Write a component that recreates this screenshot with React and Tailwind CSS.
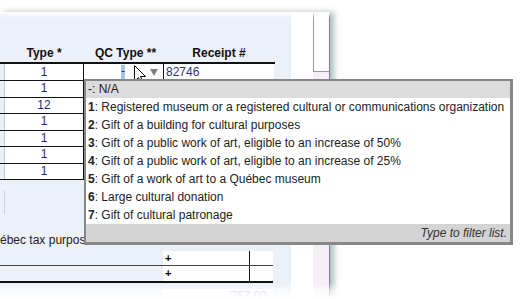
const OPTIONS = [
  { code: '1', label: 'Registered museum or a registered cultural or communications organization' },
  { code: '2', label: 'Gift of a building for cultural purposes' },
  { code: '3', label: 'Gift of a public work of art, eligible to an increase of 50%' },
  { code: '4', label: 'Gift of a public work of art, eligible to an increase of 25%' },
  { code: '5', label: 'Gift of a work of art to a Québec museum' },
  { code: '6', label: 'Large cultural donation' },
  { code: '7', label: 'Gift of cultural patronage' },
];

const TYPE_ROWS = [
  { value: '1', h: 'h-[16px]' },
  { value: '12', h: 'h-[15px]' },
  { value: '1', h: 'h-[16px]' },
  { value: '1', h: 'h-[15px]' },
  { value: '1', h: 'h-[16px]' },
  { value: '1', h: 'h-[15px]' },
];

function Cursor() {
  return (
    <svg width="13" height="21" viewBox="0 0 13 21" className="absolute left-[134px] top-[65px]">
      <path
        d="M0.5 0.5 L0.5 16.5 L4.5 12.5 L7.5 19.5 L9.5 18.5 L6.5 11.5 L11.5 11.5 Z"
        fill="white"
        stroke="black"
        strokeWidth="1"
      />
    </svg>
  );
}

function Dropdown() {
  return (
    <div className="absolute left-[84px] top-[79px] w-[429px] bg-white border-t-2 border-l-2 border-r-[3px] border-b-[3px] border-[#878787] text-[12px] text-[#222]">
      <div className="h-[17px] leading-[17px] pl-[2px] bg-[#dcdcdc]">-: N/A</div>
      {OPTIONS.map((o) => (
        <div key={o.code} className="h-[18px] leading-[18px] pl-[2px] whitespace-nowrap">
          <span className="font-bold">{o.code}</span>: {o.label}
        </div>
      ))}
      <div className="h-[18px] leading-[18px] pr-[3px] bg-[#d4d4d4] text-right italic text-[#333]">
        Type to filter list.
      </div>
    </div>
  );
}

export default function App() {
  return (
    <div className="relative w-[524px] h-[299px] bg-white overflow-hidden font-['Liberation_Sans',Arial,sans-serif]">
      <div className="relative flex w-[330px] h-[287px] mt-[12px] shadow-[4px_0_6px_rgba(0,0,0,0.28)]">
        {/* form area */}
        <div className="w-[291px] bg-[#ebf0f9] flex flex-col">
          {/* header labels */}
          <div className="h-[50px] flex items-end pl-[4px] pb-[2px] text-[12px] font-bold text-[#111] leading-[14px]">
            <div className="w-[80px] text-center">Type *</div>
            <div className="w-[80px] text-center pl-[3px]">QC Type **</div>
            <div className="w-[110px] text-center">Receipt #</div>
          </div>

          {/* first row, with the open select */}
          <div className="w-[275px] border-t-2 border-[#111]">
            <div className="flex h-[17px] border-b border-[#111] text-[12px] leading-[16px]">
              <div className="w-[4px]" />
              <div className="w-[80px] bg-white border-l border-[#c8c8c8] border-r-[1.5px] border-r-[#111] text-center text-[#1f2d63]">1</div>
              <div className="w-[80px] bg-white border-r border-[#111] flex items-center">
                <span className="ml-[37px] h-[14px] w-[4px] bg-[#a3c6ea] text-[#334] leading-[13px] text-center">-</span>
                <svg width="8" height="7" viewBox="0 0 8 7" className="ml-auto mr-[5px]">
                  <path d="M0 0 H8 L4 7 Z" fill="#808080" />
                </svg>
              </div>
              <div className="w-[110px] bg-white pl-[2px] text-[#2d3570]">82746</div>
            </div>
            {TYPE_ROWS.map((r, i) => (
              <div key={i} className={`flex ${r.h} box-content border-b border-[#111] text-[12px] leading-[15px]`}>
                <div className="w-[4px]" />
                <div className="w-[80px] bg-white border-l border-[#c8c8c8] border-r-[1.5px] border-r-[#111] text-center text-[#1f2d63]">
                  {r.value}
                </div>
                <div className="w-[190px] bg-white" />
              </div>
            ))}
          </div>

          {/* space under the rows */}
          <div className="h-[53px] pl-[4px] pt-[10px]">
            <div className="h-[24px] border-l border-[#d0d4dc]" />
          </div>

          <div className="h-[14px] overflow-hidden text-[12px] leading-[14px] text-[#222] whitespace-nowrap">
            <span className="-ml-[16px]">Québec tax purposes</span>
          </div>

          <div className="h-[4px]" />

          {/* totals rows */}
          <div className="w-[273px]">
            <div className="flex h-[15px] border-b-[1.5px] border-[#444]">
              <div className="w-[163px]" />
              <div className="w-[87px] bg-white border-r border-[#111] text-[11px] font-bold leading-[14px] pl-[2px]">+</div>
              <div className="w-[23px] bg-white" />
            </div>
            <div className="flex h-[17px] border-b-2 border-[#111]">
              <div className="w-[163px]" />
              <div className="w-[87px] bg-white border-r border-[#111] text-[11px] font-bold leading-[14px] pl-[2px]">+</div>
              <div className="w-[23px] bg-white" />
            </div>
            <div className="flex h-[8px] mt-[6px]">
              <div className="w-[163px]" />
              <div className="w-[110px] bg-white pr-[6px] text-right text-[12px] leading-[14px] text-[#8a9bd6]">757.00</div>
            </div>
          </div>
        </div>

        {/* right strip */}
        <div className="w-[22px] bg-white" />
        <div className="w-[16px] flex flex-col bg-[#f4f0f6]">
          <div className="h-[60px] bg-white border-l border-b border-[#9a9a9a]" />
        </div>
        <div className="w-[1px] bg-[#3b9cb6]" />

        {/* fades at the edges of the captured picture */}
        <div className="absolute left-0 top-0 w-[330px] h-[6px] bg-gradient-to-b from-white to-transparent" />
        <div className="absolute left-0 bottom-0 w-[340px] h-[16px] bg-gradient-to-t from-white via-white/70 to-transparent" />
      </div>

      <Cursor />
      <Dropdown />
    </div>
  );
}
